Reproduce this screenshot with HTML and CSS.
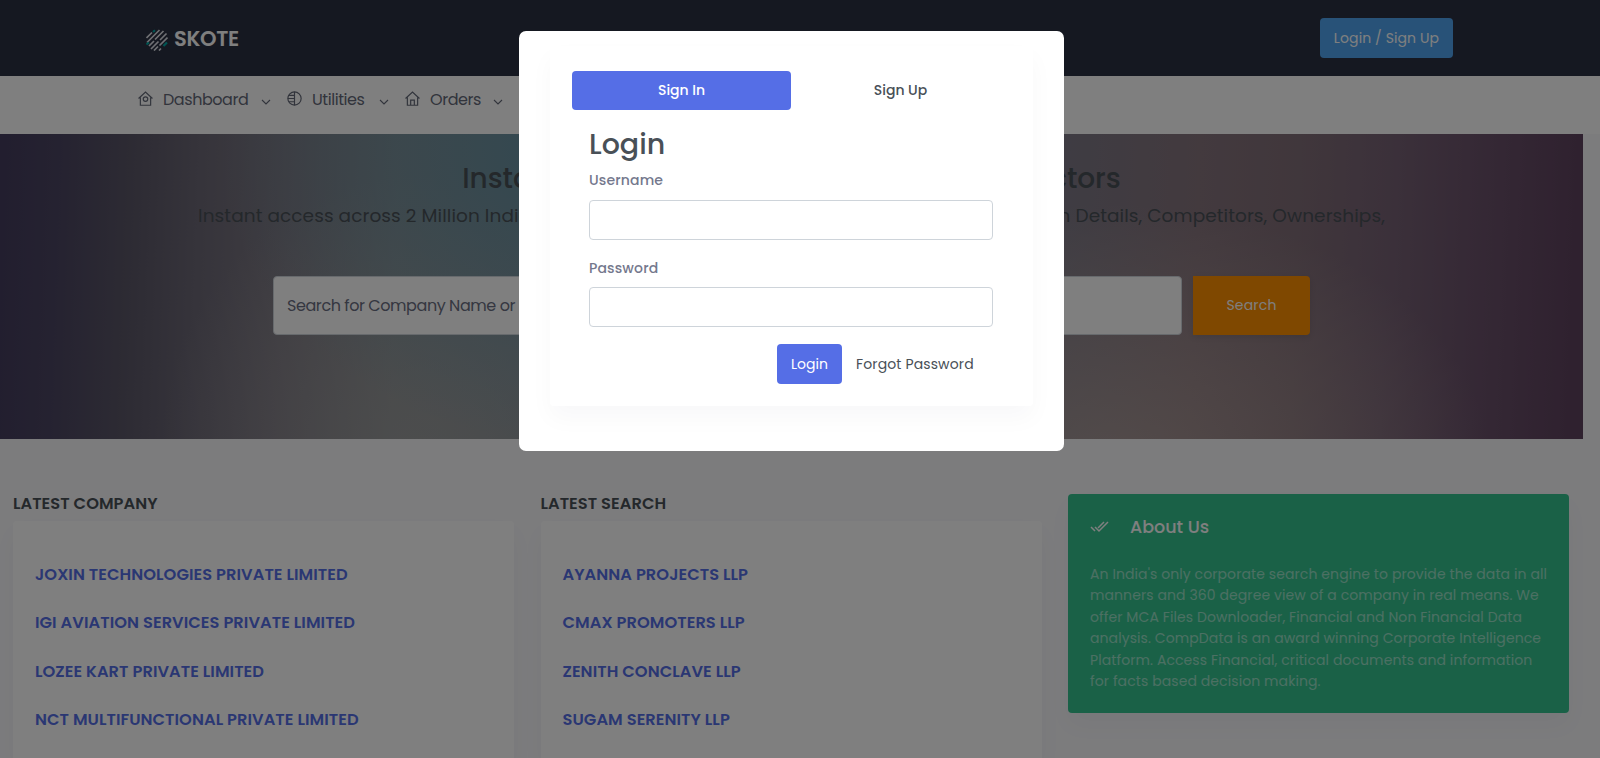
FILE: index.html
```html
<!DOCTYPE html>
<html lang="en">
<head>
    <meta charset="UTF-8">
    <meta name="viewport" content="width=device-width, initial-scale=1.0">
    <title>Skote</title>
    <link rel="stylesheet" href="styles.css">
</head>
<body>
    <header class="topbar">
        <a href="#" class="logo">
            <svg width="22" height="22" viewBox="0 0 22 22" fill="none" stroke-width="1.7">
                <path stroke="#dfe1e8" d="M.5 9L6 3.500M1 13.500L13.500 1M9 10.500L17.500 2M3 17L8 12M5 20L12.500 12.500M14 11L20.500 4.500M13.500 16.500L21.500 8.500M8 21.500L12 17.500M13 21.500L15 19.500"/>
                <path stroke="#00a9a5" stroke-width="2.200" d="M7 3L9 1.200M.5 15.500L3 13.500M17.500 17L21 13.500"/>
            </svg>
            <span class="logo-text">SKOTE</span>
        </a>
        <a href="#" class="btn btn-info">Login / Sign Up</a>
    </header>

    <nav class="topnav">
        <a href="#" class="nav-link nav-dashboard">
            <svg class="nav-icon" viewBox="0 0 14 14"><path d="M.5 7L7 1l6.500 6M2.200 6v7.300h9.600V6"/><circle cx="7" cy="7.500" r="2.100"/></svg>
            <span>Dashboard</span>
            <svg class="arrow" viewBox="0 0 10 6"><path d="M1 1l4 4 4-4"/></svg>
        </a>
        <a href="#" class="nav-link nav-utilities">
            <svg class="nav-icon" viewBox="0 0 14 14"><circle cx="7" cy="7" r="6.200"/><path d="M7 .800v12.400M1.500 4H7M.800 7H7M1.500 10H7"/></svg>
            <span>Utilities</span>
            <svg class="arrow" viewBox="0 0 10 6"><path d="M1 1l4 4 4-4"/></svg>
        </a>
        <a href="#" class="nav-link nav-orders">
            <svg class="nav-icon" viewBox="0 0 14 14"><path d="M.5 7L7 1l6.500 6M2.200 6v7.300h9.600V6M5.300 13V8.500h3.400V13"/></svg>
            <span>Orders</span>
            <svg class="arrow" viewBox="0 0 10 6"><path d="M1 1l4 4 4-4"/></svg>
        </a>
    </nav>

    <section class="banner">
        <h2 class="banner-title">Instant Company Information with All Directors</h2>
        <p class="banner-text">Instant access across 2 Million Indian Companies, Financials, Documents, News, Contact, Loan Details, Competitors, Ownerships,</p>
        <form class="search">
            <input type="text" class="search-input" placeholder="Search for Company Name or CIN">
            <button type="button" class="search-btn">Search</button>
        </form>
    </section>

    <main class="content">
        <div class="column">
            <h5 class="column-title">LATEST COMPANY</h5>
            <div class="card">
                <a href="#">JOXIN TECHNOLOGIES PRIVATE LIMITED</a>
                <a href="#">IGI AVIATION SERVICES PRIVATE LIMITED</a>
                <a href="#">LOZEE KART PRIVATE LIMITED</a>
                <a href="#">NCT MULTIFUNCTIONAL PRIVATE LIMITED</a>
            </div>
        </div>
        <div class="column">
            <h5 class="column-title">LATEST SEARCH</h5>
            <div class="card">
                <a href="#">AYANNA PROJECTS LLP</a>
                <a href="#">CMAX PROMOTERS LLP</a>
                <a href="#">ZENITH CONCLAVE LLP</a>
                <a href="#">SUGAM SERENITY LLP</a>
            </div>
        </div>
        <div class="about">
            <h5 class="about-title">
                <svg width="19" height="12" viewBox="0 0 19 12" fill="none" stroke="#fff" stroke-width="1.5"><path d="M1 6l4 4M5 6l4 4 9-9M8 7l6-6"/></svg>
                <span>About Us</span>
            </h5>
            <p class="about-text">
                An India's only corporate search engine to provide the data in all<br>
                manners and 360 degree view of a company in real means. We<br>
                offer MCA Files Downloader, Financial and Non Financial Data<br>
                analysis. CompData is an award winning Corporate Intelligence<br>
                Platform. Access Financial, critical documents and information<br>
                for facts based decision making.
            </p>
        </div>
    </main>

    <!-- Login / Sign Up modal -->
    <div class="modal-backdrop">
        <div class="modal">
            <div class="modal-card">
                <div class="tabs">
                    <a href="#" class="tab active">Sign In</a>
                    <a href="#" class="tab">Sign Up</a>
                </div>
                <form class="login-form">
                    <h2 class="login-title">Login</h2>
                    <label for="username">Username</label>
                    <input type="text" id="username">
                    <label class="label-pass" for="password">Password</label>
                    <input type="password" id="password">
                    <div class="login-actions">
                        <button type="button" class="btn btn-primary">Login</button>
                        <a href="#" class="forgot">Forgot Password</a>
                    </div>
                </form>
            </div>
        </div>
    </div>
</body>
</html>
```
FILE: styles.css
```css
* {
    box-sizing: border-box;
}
html, body {
    height: 100%;
    overflow: hidden;
}
body {
    margin: 0;
    font-family: Poppins, Inter, sans-serif;
    font-size: 14px;
    color: #495057;
    background-color: #f8f8fb;
}
a {
    text-decoration: none;
    color: inherit;
}
h2, h5, p {
    margin: 0;
}
input, button {
    font-family: inherit;
}
.btn {
    display: flex;
    align-items: center;
    justify-content: center;
    height: 40px;
    border: 0;
    border-radius: 4px;
    color: #fff;
    font-size: 14px;
    white-space: nowrap;
}

/* header */
.topbar {
    height: 76px;
    padding: 0 147px 0 146px;
    display: flex;
    align-items: center;
    justify-content: space-between;
    background-color: #2a3042;
}
.logo {
    display: flex;
    align-items: center;
    gap: 6px;
    margin-top: 3px;
}
.logo-text {
    margin-top: -1px;
    font-size: 21px;
    line-height: 22px;
    font-weight: 600;
    color: #fff;
    letter-spacing: -0.3px;
}
.btn-info {
    width: 133px;
    padding-top: 1px;
    margin-bottom: 1px;
    background-color: #50a5f1;
    letter-spacing: 0.1px;
}
.topnav {
    height: 58px;
    padding: 12px 0 0 138px;
    display: flex;
    align-items: flex-start;
    background-color: #fff;
    color: #646978;
    font-size: 16px;
    line-height: 24px;
    letter-spacing: -0.45px;
}
.nav-link {
    display: flex;
    align-items: center;
}
.nav-link svg {
    fill: none;
    stroke: #646978;
    stroke-width: 1.1;
}
.nav-icon {
    width: 15px;
    height: 15px;
    margin: 0 10px 4px 0;
}
.arrow {
    width: 10px;
    height: 6px;
    margin: 3px 0 0 auto;
}
.nav-dashboard {
    width: 133px;
    margin-right: 16px;
}
.nav-utilities {
    width: 102px;
    margin-right: 16px;
}
.nav-orders {
    width: 98px;
}

/* search banner */
.banner {
    width: 1583px;
    height: 305px;
    padding-top: 25px;
    text-align: center;
    white-space: nowrap;
    background:
        radial-gradient(ellipse 360px 300px at 580px 10px, rgba(88, 145, 166, 0.75), rgba(100, 150, 172, 0)),
        radial-gradient(ellipse 380px 260px at 1110px 330px, rgba(190, 172, 162, 0.6), rgba(190, 172, 162, 0)),
        radial-gradient(ellipse 260px 280px at 420px 320px, rgba(172, 170, 166, 0.45), rgba(176, 173, 168, 0)),
        linear-gradient(92deg, #443c5e 0, #4b4562 60px, #5a5667 130px, #6c6876 200px, #7e7a84 290px, #8a8e92 400px, #85929c 700px, #7c7a88 1040px, #86747d 1200px, #816e78 1300px, #776275 1390px, #6b526b 1480px, #5e425e 1583px);
}
.banner-title {
    font-size: 28px;
    line-height: 40px;
    font-weight: 500;
    letter-spacing: -0.05px;
}
.banner-text {
    margin-top: 4px;
    font-size: 18.5px;
    line-height: 26px;
    letter-spacing: 0.07px;
}
.search {
    display: flex;
    margin: 47px 0 0 273px;
}
.search-input {
    width: 909px;
    height: 59px;
    padding: 0 12px 0 13px;
    border: 1px solid #ced4da;
    border-radius: 4px;
    background-color: #fff;
    font-size: 16px;
    letter-spacing: -0.43px;
}
.search-input::placeholder {
    color: #6a6e82;
    opacity: 1;
}
.search-btn {
    width: 117px;
    height: 59px;
    margin-left: 11px;
    border: 0;
    border-radius: 0 4px 4px 0;
    background-color: #ff9000;
    color: #fff;
    font-size: 14px;
    letter-spacing: 0.2px;
    box-shadow: 0 2px 6px rgba(0, 0, 0, 0.1);
}

/* columns */
.content {
    width: 1583px;
    padding: 55px 14px 0 13px;
    display: grid;
    grid-template-columns: repeat(3, 501px);
    justify-content: space-between;
    align-items: start;
}
.column-title {
    height: 27px;
    font-size: 16.25px;
    line-height: 19px;
    font-weight: 600;
    letter-spacing: 0.05px;
}
.card {
    display: flex;
    flex-direction: column;
    height: 237px;
    padding: 42px 22px 0;
    border-radius: 4px 4px 0 0;
    background-color: #fff;
    box-shadow: 0 12px 24px rgba(18, 38, 63, 0.03);
    font-size: 16.25px;
    line-height: 24.4px;
    font-weight: 600;
    letter-spacing: 0.06px;
    color: #556ee6;
}
.card a {
    margin-bottom: 24px;
    white-space: nowrap;
}
.about {
    height: 219px;
    padding: 21px 22px;
    border-radius: 4px;
    background-color: #34c38f;
    color: #fff;
    box-shadow: 0 12px 24px rgba(18, 38, 63, 0.03);
}
.about-title {
    display: flex;
    align-items: center;
    gap: 21px;
    font-size: 17.5px;
    line-height: 24px;
    font-weight: 500;
}
.about-text {
    margin-top: 25px;
    font-size: 14px;
    line-height: 21.4px;
    letter-spacing: 0.09px;
    color: rgba(255, 255, 255, 0.5);
    white-space: nowrap;
}

/* modal */
.modal-backdrop {
    position: fixed;
    inset: 0;
    padding: 31px 17px 0 0;
    background-color: rgba(0, 0, 0, 0.5);
}
.modal {
    width: 545px;
    height: 420px;
    margin: 0 auto;
    padding: 15px 31px 0;
    border-radius: 7px;
    background-color: #fff;
}
.modal-card {
    height: 360px;
    padding: 25px 23px 0 22px;
    border-radius: 4px;
    box-shadow: 0 12px 24px rgba(18, 38, 63, 0.03);
}
.tabs {
    display: flex;
}
.tab {
    flex: 1;
    height: 39px;
    border-radius: 4px;
    line-height: 39px;
    font-weight: 500;
    text-align: center;
}
.tab.active {
    background-color: #556ee6;
    color: #fff;
}
.login-form {
    padding: 16px 17px 0;
}
.login-title {
    font-size: 28.5px;
    line-height: 36px;
    font-weight: 500;
}
.login-form label {
    display: block;
    height: 38px;
    padding-top: 8px;
    line-height: 21px;
    font-weight: 500;
    letter-spacing: 0.15px;
    color: #74788d;
}
.login-form input {
    display: block;
    width: 404px;
    height: 40px;
    border: 1px solid #ced4da;
    border-radius: 4px;
    background-color: #fff;
}
.login-form .label-pass {
    height: 47px;
    padding-top: 18px;
}
.login-actions {
    display: flex;
    align-items: center;
    gap: 14px;
    margin: 17px 0 0 188px;
}
.btn-primary {
    width: 65px;
    background-color: #556ee6;
}
.forgot {
    letter-spacing: 0.13px;
}
```
